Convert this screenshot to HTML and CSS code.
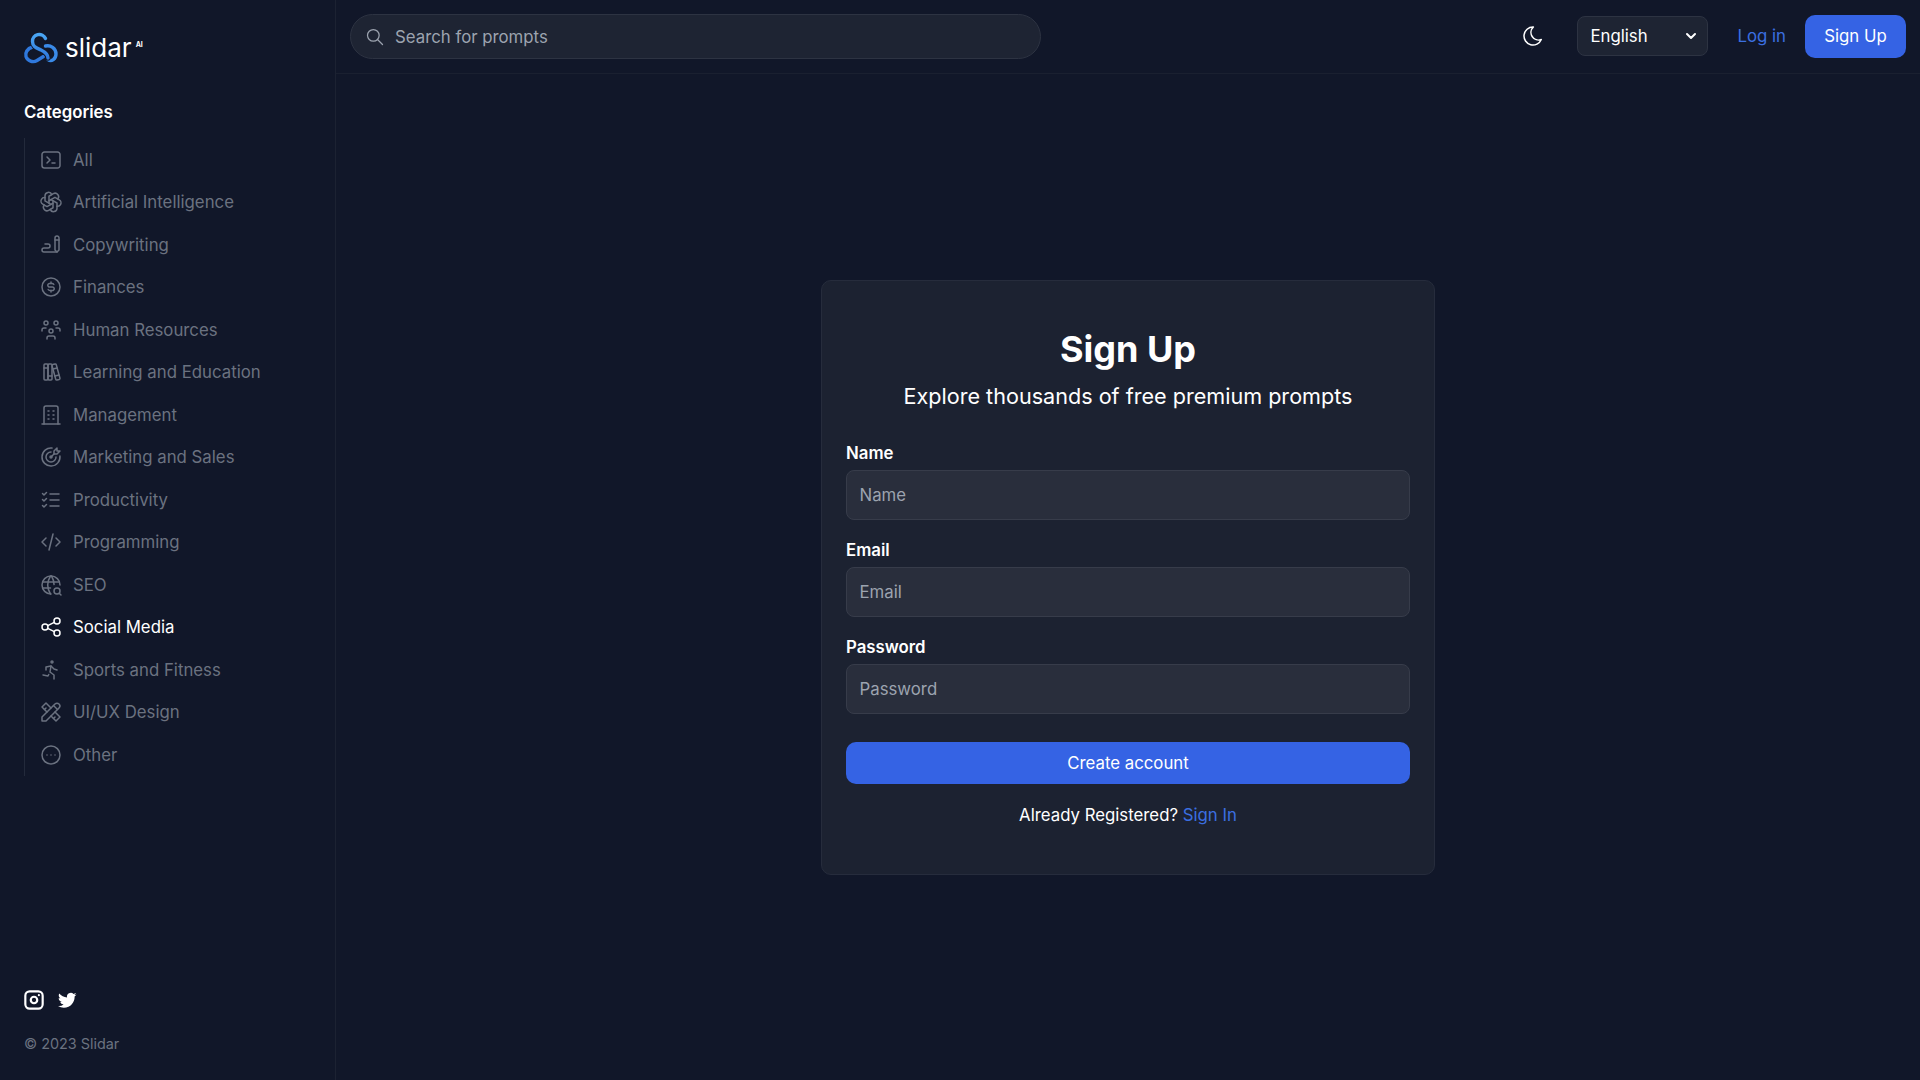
FILE: index.html
```html
<!DOCTYPE html>
<html lang="en">
<head>
<meta charset="utf-8">
<title>Slidar AI - Sign Up</title>
<link rel="stylesheet" href="styles.css">
</head>
<body>
<div class="app">
  <aside class="sidebar">
    <a class="brand" href="#">
      <svg class="brand-mark" viewBox="0 0 36 33" fill="none" stroke-width="3.4" stroke-linecap="round">
        <defs>
          <linearGradient id="lgTop" x1="0" y1="0" x2="0" y2="1"><stop offset="0" stop-color="#4aa6f4"/><stop offset="1" stop-color="#2f78dc"/></linearGradient>
        </defs>
        <path d="M22.5 14C27.5 12.8 33 16 33 22C33 27 28.5 30 25 27.5" stroke="#3a8ae8"/>
        <path d="M9.5 15C4 16.5 2 21 3 24.5C4.5 29 10 31 14 28.5L20.5 24.5" stroke="#2f78dc"/>
        <path d="M22.5 6.5A6.8 6.8 0 0 0 9.5 9.5C9.5 15 14 16 18 18C22 20 25 22 25 26" stroke="#111729" stroke-width="5.4"/>
        <path d="M22.5 6.5A6.8 6.8 0 0 0 9.5 9.5C9.5 15 14 16 18 18C22 20 25 22 25 26" stroke="url(#lgTop)"/>
      </svg>
      <span class="brand-name">slidar</span>
      <span class="brand-ai">AI</span>
    </a>
    <h2 class="cat-title">Categories</h2>
    <ul class="cat-list">
      <li class="cat"><svg class="ico" viewBox="0 0 24 24"><path d="M8 9l3 3l-3 3"/><path d="M13 15l3 0"/><path d="M3 6.5a2.5 2.5 0 0 1 2.5 -2.5h13a2.5 2.5 0 0 1 2.5 2.5v11a2.5 2.5 0 0 1 -2.5 2.5h-13a2.5 2.5 0 0 1 -2.5 -2.5z"/></svg>All</li>
      <li class="cat"><svg class="ico" viewBox="0 0 24 24"><path d="M11.217 19.384a3.501 3.501 0 0 0 6.783 -1.217v-5.167l-6 -3.35"/><path d="M5.214 15.014a3.501 3.501 0 0 0 4.446 5.266l4.34 -2.534v-6.946"/><path d="M6 7.63c-1.391 -.236 -2.787 .395 -3.534 1.689a3.474 3.474 0 0 0 1.271 4.745l4.263 2.514l6 -3.348"/><path d="M12.783 4.616a3.501 3.501 0 0 0 -6.783 1.217v5.067l6 3.45"/><path d="M18.786 8.986a3.501 3.501 0 0 0 -4.446 -5.266l-4.34 2.534v6.946"/><path d="M18 16.302c1.391 .236 2.787 -.395 3.534 -1.689a3.474 3.474 0 0 0 -1.271 -4.745l-4.308 -2.514l-5.955 3.42"/></svg>Artificial Intelligence</li>
      <li class="cat"><svg class="ico" viewBox="0 0 24 24"><path d="M20 17v-12c0 -1.121 -.879 -2 -2 -2s-2 .879 -2 2v12l2 2l2 -2z"/><path d="M16 7h4"/><path d="M18 19h-13a2 2 0 1 1 0 -4h4a2 2 0 1 0 0 -4h-3"/></svg>Copywriting</li>
      <li class="cat"><svg class="ico" viewBox="0 0 24 24"><path d="M12 3a9 9 0 1 0 0 18a9 9 0 0 0 0 -18"/><path d="M14.8 9.5a2 2 0 0 0 -1.8 -1h-2a1.8 1.8 0 1 0 0 3.5h2a1.8 1.8 0 1 1 0 3.5h-2a2 2 0 0 1 -1.8 -1"/><path d="M12 7v1.5m0 7v1.5"/></svg>Finances</li>
      <li class="cat"><svg class="ico" viewBox="0 0 24 24"><path d="M10 13a2 2 0 1 0 4 0a2 2 0 0 0 -4 0"/><path d="M8 21v-1a2 2 0 0 1 2 -2h4a2 2 0 0 1 2 2v1"/><path d="M15 5a2 2 0 1 0 4 0a2 2 0 0 0 -4 0"/><path d="M17 10h2a2 2 0 0 1 2 2v1"/><path d="M5 5a2 2 0 1 0 4 0a2 2 0 0 0 -4 0"/><path d="M3 13v-1a2 2 0 0 1 2 -2h2"/></svg>Human Resources</li>
      <li class="cat"><svg class="ico" viewBox="0 0 24 24"><path d="M5 5a1 1 0 0 1 1 -1h2a1 1 0 0 1 1 1v14a1 1 0 0 1 -1 1h-2a1 1 0 0 1 -1 -1z"/><path d="M9 5a1 1 0 0 1 1 -1h2a1 1 0 0 1 1 1v14a1 1 0 0 1 -1 1h-2a1 1 0 0 1 -1 -1z"/><path d="M5 8h4"/><path d="M9 16h4"/><path d="M13.803 4.56l2.184 -.53c.562 -.135 1.133 .19 1.282 .732l3.695 13.418a1.02 1.02 0 0 1 -.634 1.219l-.133 .041l-2.184 .53c-.562 .135 -1.133 -.19 -1.282 -.732l-3.695 -13.418a1.02 1.02 0 0 1 .634 -1.219l.133 -.041z"/><path d="M14 9l4 -1"/><path d="M16 16l3.923 -.98"/></svg>Learning and Education</li>
      <li class="cat"><svg class="ico" viewBox="0 0 24 24"><path d="M3 21l18 0"/><path d="M9 8l1 0"/><path d="M9 12l1 0"/><path d="M9 16l1 0"/><path d="M14 8l1 0"/><path d="M14 12l1 0"/><path d="M14 16l1 0"/><path d="M5 21v-16a2 2 0 0 1 2 -2h10a2 2 0 0 1 2 2v16"/></svg>Management</li>
      <li class="cat"><svg class="ico" viewBox="0 0 24 24"><path d="M11 12a1 1 0 1 0 2 0a1 1 0 1 0 -2 0"/><path d="M12 7a5 5 0 1 0 5 5"/><path d="M13 3.055a9 9 0 1 0 7.941 7.945"/><path d="M15 6v3h3l3 -3h-3v-3z"/><path d="M15 9l-3 3"/></svg>Marketing and Sales</li>
      <li class="cat"><svg class="ico" viewBox="0 0 24 24"><path d="M3.5 5.5l1.5 1.5l2.5 -2.5"/><path d="M3.5 11.5l1.5 1.5l2.5 -2.5"/><path d="M3.5 17.5l1.5 1.5l2.5 -2.5"/><path d="M11 6l9 0"/><path d="M11 12l9 0"/><path d="M11 18l9 0"/></svg>Productivity</li>
      <li class="cat"><svg class="ico" viewBox="0 0 24 24"><path d="M7 8l-4 4l4 4"/><path d="M17 8l4 4l-4 4"/><path d="M14 4l-4 16"/></svg>Programming</li>
      <li class="cat"><svg class="ico" viewBox="0 0 24 24"><path d="M21 12a9 9 0 1 0 -9 9"/><path d="M3.6 9h16.8"/><path d="M3.6 15h7.9"/><path d="M11.5 3a17 17 0 0 0 0 18"/><path d="M12.5 3a16.984 16.984 0 0 1 2.574 8.62"/><path d="M15 18a3 3 0 1 0 6 0a3 3 0 1 0 -6 0"/><path d="M20.2 20.2l1.8 1.8"/></svg>SEO</li>
      <li class="cat cat-active"><svg class="ico" viewBox="0 0 24 24"><path d="M3 12a3 3 0 1 0 6 0a3 3 0 1 0 -6 0"/><path d="M15 6a3 3 0 1 0 6 0a3 3 0 1 0 -6 0"/><path d="M15 18a3 3 0 1 0 6 0a3 3 0 1 0 -6 0"/><path d="M8.7 10.7l6.6 -3.4"/><path d="M8.7 13.3l6.6 3.4"/></svg>Social Media</li>
      <li class="cat"><svg class="ico" viewBox="0 0 24 24"><path d="M12 4a1 1 0 1 0 2 0a1 1 0 1 0 -2 0"/><path d="M4 17l5 1l.75 -1.5"/><path d="M15 21l0 -4l-4 -3l1 -6"/><path d="M7 12l0 -3l5 -1l3 3l3 1"/></svg>Sports and Fitness</li>
      <li class="cat"><svg class="ico" viewBox="0 0 24 24"><path d="M3 21h4l13 -13a1.5 1.5 0 0 0 -4 -4l-13 13v4"/><path d="M14.5 5.5l4 4"/><path d="M12 8l-5 -5l-4 4l5 5"/><path d="M7 8l-1.5 1.5"/><path d="M16 12l5 5l-4 4l-5 -5"/><path d="M16 17l-1.5 1.5"/></svg>UI/UX Design</li>
      <li class="cat"><svg class="ico" viewBox="0 0 24 24"><path d="M12 3a9 9 0 1 0 0 18a9 9 0 0 0 0 -18"/><path d="M8 12v.01"/><path d="M12 12v.01"/><path d="M16 12v.01"/></svg>Other</li>
    </ul>
    <div class="side-foot">
      <div class="socials">
        <svg class="social-ig" viewBox="0 0 24 24"><path d="M4 8a4 4 0 0 1 4 -4h8a4 4 0 0 1 4 4v8a4 4 0 0 1 -4 4h-8a4 4 0 0 1 -4 -4z"/><path d="M9 12a3 3 0 1 0 6 0a3 3 0 1 0 -6 0"/><path d="M16.5 7.5l0 .01"/></svg>
        <svg class="social-tw" viewBox="0 0 24 24"><path d="M23.953 4.57a10 10 0 01-2.825.775 4.958 4.958 0 002.163-2.723c-.951.555-2.005.959-3.127 1.184a4.92 4.92 0 00-8.384 4.482C7.69 8.095 4.067 6.13 1.64 3.162a4.822 4.822 0 00-.666 2.475c0 1.71.87 3.213 2.188 4.096a4.904 4.904 0 01-2.228-.616v.06a4.923 4.923 0 003.946 4.827 4.996 4.996 0 01-2.212.085 4.936 4.936 0 004.604 3.417 9.867 9.867 0 01-6.102 2.105c-.39 0-.779-.023-1.17-.067a13.995 13.995 0 007.557 2.209c9.053 0 13.998-7.496 13.998-13.985 0-.21 0-.42-.015-.63A9.935 9.935 0 0024 4.59z"/></svg>
      </div>
      <p class="copy">© 2023 Slidar</p>
    </div>
  </aside>
  <div class="content">
    <header class="topbar">
      <label class="search">
        <svg class="search-ico" viewBox="0 0 24 24"><path d="M3 10a7 7 0 1 0 14 0a7 7 0 1 0 -14 0"/><path d="M21 21l-6 -6"/></svg>
        <input class="search-input" type="text" placeholder="Search for prompts">
      </label>
      <div class="top-actions">
        <svg class="moon" viewBox="0 0 24 24"><path d="M12 3c.132 0 .263 0 .393 0a7.5 7.5 0 0 0 7.92 12.446a9 9 0 1 1 -8.313 -12.454z"/></svg>
        <div class="lang"><span>English</span><svg class="chev" viewBox="0 0 20 20"><path d="M6 8l4 4l4 -4"/></svg></div>
        <a class="login" href="#">Log in</a>
        <a class="signup" href="#">Sign Up</a>
      </div>
    </header>
    <main class="main">
      <section class="card">
        <h1 class="card-title">Sign Up</h1>
        <p class="card-sub">Explore thousands of free premium prompts</p>
        <form class="form">
          <div class="field"><label class="field-label">Name</label><input class="field-input" type="text" placeholder="Name"></div>
          <div class="field"><label class="field-label">Email</label><input class="field-input" type="text" placeholder="Email"></div>
          <div class="field"><label class="field-label">Password</label><input class="field-input" type="text" placeholder="Password"></div>
          <button class="submit" type="button">Create account</button>
        </form>
        <p class="already">Already Registered? <a class="link" href="#">Sign In</a></p>
      </section>
    </main>
  </div>
</div>
</body>
</html>
```
FILE: styles.css
```css
* { box-sizing: border-box; }
html, body { margin: 0; height: 100%; }
body {
  background: #111729;
  color: #fff;
  font-family: Inter, "Liberation Sans", sans-serif;
  font-size: 16.8px;
  overflow: hidden;
}
a { text-decoration: none; }
.app { display: flex; height: 100vh; }

.sidebar {
  flex: 0 0 336px;
  border-right: 1px solid #1c2232;
  padding: 32px 24px 0;
  display: flex;
  flex-direction: column;
}
.brand { display: flex; align-items: flex-start; height: 33px; margin-left: -1px; color: #fff; }
.brand-mark { width: 36px; height: 33px; flex: none; }
.brand-name { font-size: 26px; line-height: 33px; font-weight: 400; margin: -1px 0 0 6px; }
.brand-ai { font-size: 7px; font-weight: 700; margin: 9px 0 0 4px; line-height: 8px; }
.cat-title { margin: 35.4px 0 0; font-size: 16.8px; line-height: 24px; font-weight: 600; }
.cat-list {
  list-style: none;
  margin: 14px 0 0;
  padding: 0;
  border-left: 1px solid #232a3b;
  color: #6b7280;
}
.cat { display: flex; align-items: center; height: 42.5px; padding-left: 14px; gap: 10px; font-size: 16.8px; }
.cat-active { color: #fff; }
.ico { width: 24px; height: 24px; flex: none; fill: none; stroke: currentColor; stroke-width: 1.5; stroke-linecap: round; stroke-linejoin: round; }
.side-foot { margin-top: auto; padding-bottom: 26px; }
.socials { display: flex; align-items: center; margin-left: -3px; }
.social-ig { width: 26px; height: 26px; fill: none; stroke: #fff; stroke-width: 2; stroke-linecap: round; stroke-linejoin: round; }
.social-tw { width: 18.5px; height: 18.5px; fill: #fff; margin-left: 11px; }
.copy { margin: 21px 0 0; font-size: 14.4px; line-height: 20px; color: #6b7280; }

.content { flex: 1; min-width: 0; display: flex; flex-direction: column; }
.topbar {
  flex: 0 0 74px;
  display: flex;
  align-items: flex-start;
  justify-content: space-between;
  padding: 14px 14px 0 14px;
  border-bottom: 1px solid #1a2030;
}
.search {
  width: 691px; height: 45px;
  display: flex; align-items: center; gap: 10px;
  padding: 0 14px;
  background: #1e2433;
  border: 1px solid #2d3342;
  border-radius: 23px;
}
.search-ico { width: 20px; height: 20px; flex: none; fill: none; stroke: #9ca3af; stroke-width: 1.5; stroke-linecap: round; stroke-linejoin: round; }
.search-input { flex: 1; min-width: 0; background: none; border: 0; outline: 0; color: #fff; font: 16.8px Inter, sans-serif; padding: 0; }
.search-input::placeholder { color: #9ca3af; opacity: 1; }
.top-actions { display: flex; align-items: center; height: 44px; }
.moon { width: 24px; height: 24px; fill: none; stroke: #fff; stroke-width: 1.5; stroke-linecap: round; stroke-linejoin: round; }
.lang {
  width: 131px; height: 40px; margin-left: 32px;
  display: flex; align-items: center; justify-content: space-between;
  padding: 0 12px;
  background: #1e2433; border: 1px solid #2d3342; border-radius: 8px;
  font-size: 16.8px;
}
.chev { width: 20px; height: 20px; fill: none; stroke: #fff; stroke-width: 2; stroke-linecap: round; stroke-linejoin: round; margin-right: -6px; }
.login { margin-left: 29px; color: #3b6fe0; font-size: 16.8px; }
.signup {
  margin-left: 19px; width: 101px; height: 43px;
  display: flex; align-items: center; justify-content: center;
  background: #3563e4; color: #fff; border-radius: 10px; font-size: 16.8px;
}

.main { flex: 1; display: flex; align-items: center; justify-content: center; }
.card {
  width: 614px; height: 595px;
  padding: 46px 24px 0;
  background: #1c2231;
  border: 1px solid #262c3c;
  border-radius: 10px;
  text-align: center;
}
.card-title { margin: 0; font-size: 36px; line-height: 44px; font-weight: 700; }
.card-sub { margin: 11px 0 0; font-size: 21.6px; line-height: 28px; }
.form { margin-top: 31px; text-align: left; display: flex; flex-direction: column; gap: 18px; }
.field-label { display: block; font-size: 16.8px; font-weight: 600; line-height: 24px; margin-bottom: 5.5px; }
.field-input {
  display: block; width: 100%; height: 49.5px;
  padding: 0 12.5px;
  background: #292e3c;
  border: 1px solid #373c4a;
  border-radius: 8px;
  color: #fff;
  font: 16.8px Inter, sans-serif;
  outline: 0;
}
.field-input::placeholder { color: #9ca3af; opacity: 1; }
.submit {
  margin-top: 10px; height: 42.5px;
  background: #3563e4; color: #fff; border: 0; border-radius: 10px;
  font: 16.8px Inter, sans-serif;
}
.already { margin: 17px 0 0; font-size: 16.8px; line-height: 28px; }
.link { color: #3b6fe0; }
```
